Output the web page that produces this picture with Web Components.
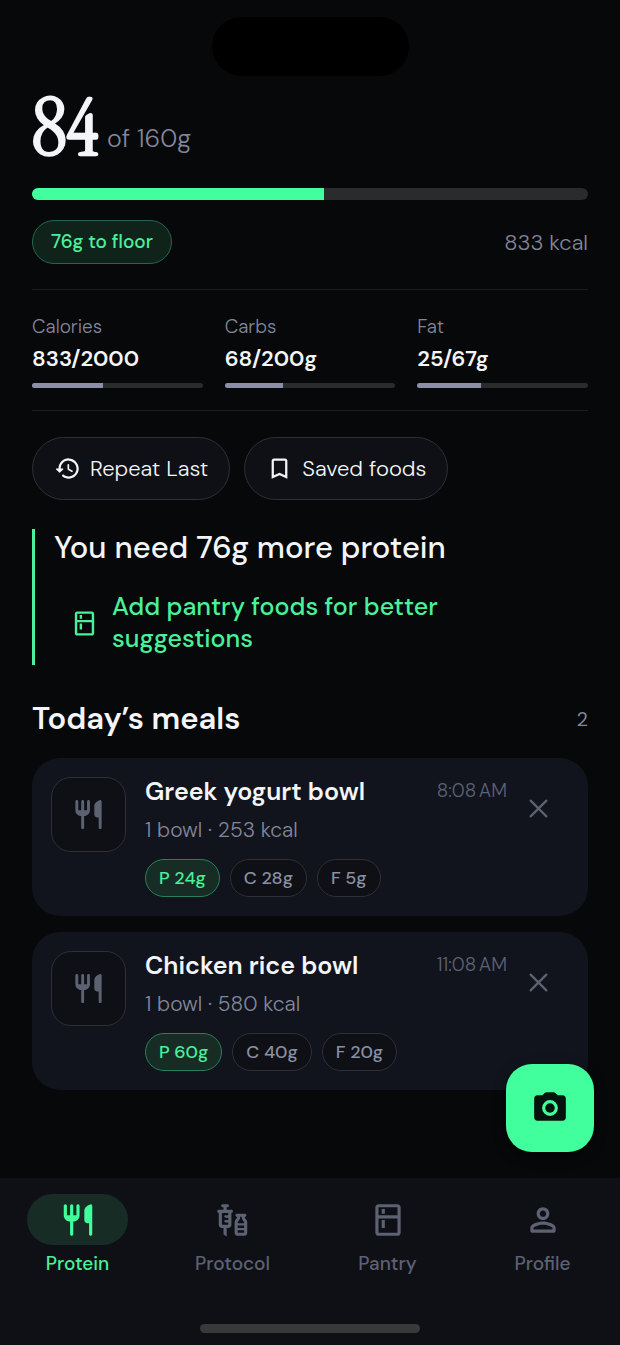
<!DOCTYPE html>
<html lang="en">
<head>
<meta charset="UTF-8">
<meta name="viewport" content="width=device-width, initial-scale=1">
<title>Protein</title>
<style>
  :root {
    --bg: #060809;
    --surface: #0e1015;
    --card: #11141c;
    --line: #1a1c1f;
    --outline: #2e3035;
    --track: #292b2d;
    --text: #f4f5f8;
    --muted: #83869b;
    --dim: #5d6273;
    --accent: #42ff9e;
    --accent-text: #4af09a;
    --accent-soft: #162c25;
    --accent-line: #23674a;
  }
  body {
    margin: 0;
    background: var(--bg);
    color: var(--text);
    font-family: "DM Sans", Inter, "Liberation Sans", sans-serif;
    font-optical-sizing: none;
  }
</style>
</head>
<body>
<protein-app></protein-app>

<script>
const ICONS = {
  restaurant: '<path d="M16 6v6c0 1.1.9 2 2 2h1v7c0 .55.45 1 1 1s1-.45 1-1V3.13c0-.65-.61-1.13-1.24-.98C17.6 2.68 16 4.51 16 6zm-5 3H9V3c0-.55-.45-1-1-1s-1 .45-1 1v6H5V3c0-.55-.45-1-1-1s-1 .45-1 1v6c0 2.21 1.79 4 4 4v8c0 .55.45 1 1 1s1-.45 1-1v-8c2.21 0 4-1.79 4-4V3c0-.55-.45-1-1-1s-1 .45-1 1v6z"/>',
  vaccines: '<path d="M11 5.5H8V4h.5c.55 0 1-.45 1-1s-.45-1-1-1h-3c-.55 0-1 .45-1 1s.45 1 1 1H6v1.5H3c-.55 0-1 .45-1 1s.45 1 1 1V15c0 1.1.9 2 2 2h1v4l2 1.5V17h1c1.1 0 2-.9 2-2V7.5c.55 0 1-.45 1-1s-.45-1-1-1zM9 9H7.25c-.41 0-.75.34-.75.75s.34.75.75.75H9V12H7.25c-.41 0-.75.34-.75.75s.34.75.75.75H9V15H5V7.5h4V9zm10.5 1.5V10c.55 0 1-.45 1-1s-.45-1-1-1h-5c-.55 0-1 .45-1 1s.45 1 1 1v.5c0 .5-1.5 1.16-1.5 3V20c0 1.1.9 2 2 2h4c1.1 0 2-.9 2-2v-6.5c0-1.84-1.5-2.5-1.5-3zm-3 0V10h1v.5c0 1.6 1.5 2 1.5 3v.5h-4v-.5c0-1 1.5-1.4 1.5-3zM19 15.5V17h-4v-1.5h4zM15 20v-1.5h4V20h-4z"/>',
  kitchen: '<path d="M18 2.01L6 2c-1.1 0-2 .89-2 2v16c0 1.1.9 2 2 2h12c1.1 0 2-.9 2-2V4c0-1.11-.9-1.99-2-1.99zM18 20H6v-9.02h12V20zm0-11H6V4h12v5zM8 5h2v3H8zm0 7h2v5H8z"/>',
  person: '<path d="M12 6c1.1 0 2 .9 2 2s-.9 2-2 2-2-.9-2-2 .9-2 2-2zm0 9c2.7 0 5.8 1.29 6 2v1H6v-.99c.2-.72 3.3-2.01 6-2.01zm0-11C9.79 4 8 5.79 8 8s1.79 4 4 4 4-1.79 4-4-1.79-4-4-4zm0 9c-2.67 0-8 1.34-8 4v2c0 .55.45 1 1 1h14c.55 0 1-.45 1-1v-2c0-2.66-5.33-4-8-4z"/>',
  history: '<path d="M13.26 3C8.17 2.86 4 6.95 4 12H2.21c-.45 0-.67.54-.35.85l2.79 2.8c.2.2.51.2.71 0l2.79-2.8c.31-.31.09-.85-.36-.85H6c0-3.9 3.18-7.05 7.1-7 3.72.05 6.85 3.18 6.9 6.9.05 3.91-3.1 7.1-7 7.1-1.61 0-3.1-.55-4.28-1.48-.4-.31-.96-.28-1.32.08-.42.42-.39 1.13.08 1.49C9 20.29 10.91 21 13 21c5.05 0 9.14-4.17 9-9.26-.13-4.69-4.05-8.61-8.74-8.74zm-.51 5c-.41 0-.75.35-.75.75v3.68c0 .35.19.68.49.86l3.12 1.85c.36.21.82.09 1.03-.26.21-.36.09-.82-.26-1.03l-2.88-1.71v-3.4c0-.4-.34-.74-.75-.74z"/>',
  bookmark: '<path d="M17 3H7c-1.1 0-1.99.9-1.99 2L5 21l7-3 7 3V5c0-1.1-.9-2-2-2zm0 15l-5-2.18L7 18V5h10v13z"/>',
  close: '<path d="M5 5l14 14M19 5L5 19" fill="none" stroke="currentColor" stroke-width="2" stroke-linecap="round"/>',
  camera: '<path fill-rule="evenodd" d="M20 4h-3.17l-1.24-1.35C15.22 2.24 14.68 2 14.12 2H9.88c-.56 0-1.1.24-1.48.65L7.17 4H4c-1.1 0-2 .9-2 2v12c0 1.1.9 2 2 2h16c1.1 0 2-.9 2-2V6c0-1.1-.9-2-2-2zM12 17a5 5 0 1 1 0-10 5 5 0 0 1 0 10z"/><circle cx="12" cy="12" r="3"/>'
};

class AppIcon extends HTMLElement {
  connectedCallback() {
    this.attachShadow({ mode: 'open' });
    this.shadowRoot.innerHTML = `
      <style>
        :host { display: block; flex: none; width: var(--icon-size, 24px); height: var(--icon-size, 24px); }
        svg { display: block; width: 100%; height: 100%; fill: currentColor; }
      </style>
      <svg viewBox="0 0 24 24" aria-hidden="true">${ICONS[this.getAttribute('name')]}</svg>
    `;
  }
}

class ProgressBar extends HTMLElement {
  connectedCallback() {
    this.attachShadow({ mode: 'open' });
    this.shadowRoot.innerHTML = `
      <style>
        :host {
          display: block;
          height: var(--bar-height, 5px);
          border-radius: 6px;
          background: var(--track);
          overflow: hidden;
        }
        div { height: 100%; width: ${this.getAttribute('value')}%; background: var(--bar-color, #8b90a8); }
      </style>
      <div></div>
    `;
  }
}

class MacroStat extends HTMLElement {
  connectedCallback() {
    this.attachShadow({ mode: 'open' });
    this.shadowRoot.innerHTML = `
      <style>
        :host { display: block; flex: 1; }
        .label { font-size: 19px; line-height: 24px; font-weight: 300; color: var(--muted); }
        .value { font-size: 22px; line-height: 30px; font-weight: 600; margin: 5px 0 9px; }
      </style>
      <div class="label">${this.getAttribute('label')}</div>
      <div class="value"><slot></slot></div>
      <progress-bar value="${this.getAttribute('value')}"></progress-bar>
    `;
  }
}

class ActionPill extends HTMLElement {
  connectedCallback() {
    this.attachShadow({ mode: 'open' });
    this.shadowRoot.innerHTML = `
      <style>
        :host { display: block; --icon-size: 27px; }
        button {
          display: flex;
          align-items: center;
          gap: 9px;
          height: 63px;
          padding: 0 21px;
          border: 1px solid var(--outline);
          border-radius: 32px;
          background: var(--surface);
          color: var(--text);
          font-family: inherit;
          font-size: 22px;
          font-weight: 300;
          white-space: nowrap;
          cursor: pointer;
        }
      </style>
      <button type="button"><app-icon name="${this.getAttribute('icon')}"></app-icon><slot></slot></button>
    `;
  }
}

class MacroChip extends HTMLElement {
  connectedCallback() {
    this.attachShadow({ mode: 'open' });
    this.shadowRoot.innerHTML = `
      <style>
        :host {
          display: block;
          box-sizing: border-box;
          height: 38px;
          padding: 0 13px;
          border: 1px solid var(--outline);
          border-radius: 19px;
          background: var(--surface);
          color: #8b8fa3;
          font-size: 18px;
          line-height: 36px;
          font-weight: 500;
          white-space: nowrap;
        }
        :host([accent]) {
          background: var(--accent-soft);
          border-color: #268256;
          color: var(--accent-text);
        }
      </style>
      <slot></slot>
    `;
  }
}

class MealCard extends HTMLElement {
  connectedCallback() {
    this.attachShadow({ mode: 'open' });
    this.shadowRoot.innerHTML = `
      <style>
        :host {
          display: flex;
          align-items: flex-start;
          padding: 19px;
          border-radius: 28px;
          background: var(--card);
        }
        .thumb {
          display: flex;
          align-items: center;
          justify-content: center;
          flex: none;
          box-sizing: border-box;
          width: 75px;
          height: 75px;
          border: 1px solid var(--outline);
          border-radius: 20px;
          background: var(--surface);
          color: var(--dim);
          --icon-size: 35px;
        }
        .body { flex: 1; min-width: 0; margin-left: 19px; }
        .head { display: flex; justify-content: space-between; align-items: flex-start; }
        h3 { margin: 0; font-size: 25px; line-height: 30px; font-weight: 600; }
        time { font-size: 19px; line-height: 28px; font-weight: 300; color: var(--dim); }
        p { margin: 9px 0 14px; font-size: 21px; line-height: 29px; font-weight: 300; color: var(--muted); }
        .chips { display: flex; gap: 10px; }
        button {
          display: flex;
          align-items: center;
          justify-content: center;
          flex: none;
          width: 62px;
          height: 62px;
          padding: 0;
          border: 0;
          background: none;
          color: var(--dim);
          cursor: pointer;
          --icon-size: 27px;
        }
      </style>
      <div class="thumb"><app-icon name="restaurant"></app-icon></div>
      <div class="body">
        <div class="head">
          <h3>${this.getAttribute('name')}</h3>
          <time>${this.getAttribute('time')}</time>
        </div>
        <p>${this.getAttribute('detail')}</p>
        <div class="chips"><slot></slot></div>
      </div>
      <button type="button" aria-label="Remove meal"><app-icon name="close"></app-icon></button>
    `;
  }
}

class NavItem extends HTMLElement {
  connectedCallback() {
    this.attachShadow({ mode: 'open' });
    this.shadowRoot.innerHTML = `
      <style>
        :host { display: block; flex: 1; color: var(--dim); --icon-size: 38px; }
        :host([active]) { color: var(--accent-text); }
        a {
          display: flex;
          flex-direction: column;
          align-items: center;
          gap: 6px;
          color: inherit;
          text-decoration: none;
          font-size: 19px;
          line-height: 26px;
          font-weight: 500;
        }
        .pill {
          display: flex;
          align-items: center;
          justify-content: center;
          width: 101px;
          height: 51px;
          border-radius: 26px;
        }
        :host([active]) .pill { background: var(--accent-soft); color: var(--accent); }
      </style>
      <a href="#${this.getAttribute('icon')}">
        <span class="pill"><app-icon name="${this.getAttribute('icon')}"></app-icon></span>
        <slot></slot>
      </a>
    `;
  }
}

class BottomNav extends HTMLElement {
  connectedCallback() {
    this.attachShadow({ mode: 'open' });
    this.shadowRoot.innerHTML = `
      <style>
        :host { display: block; padding: 16px 0 12px; background: var(--surface); }
        nav { display: flex; }
        .home { width: 220px; height: 9px; margin: 47px auto 0; border-radius: 5px; background: #39393a; }
      </style>
      <nav><slot></slot></nav>
      <div class="home"></div>
    `;
  }
}

class ProteinApp extends HTMLElement {
  connectedCallback() {
    this.attachShadow({ mode: 'open' });
    this.shadowRoot.innerHTML = `
      <style>
        :host { display: flex; flex-direction: column; min-height: 100vh; }
        .island { width: 197px; height: 59px; margin: 17px auto 0; border-radius: 30px; background: #000; }
        main { flex: 1; position: relative; padding: 0 32px 88px; }
        h2 { margin: 0; font-weight: 500; font-size: 31px; line-height: 38px; }

        .total { display: flex; align-items: flex-end; gap: 9px; height: 88px; margin-bottom: 24px; }
        .total strong { font: 700 80px/72px "Instrument Serif", "Liberation Serif", serif; }
        .total span { font-size: 25px; line-height: 32px; font-weight: 300; color: var(--muted); padding-bottom: 9px; }
        .goal { --bar-height: 12px; --bar-color: var(--accent); }
        .status { display: flex; justify-content: space-between; align-items: center; margin: 20px 0 25px; }
        .badge {
          padding: 0 18px;
          border: 1px solid var(--accent-line);
          border-radius: 22px;
          background: #0f231b;
          color: var(--accent-text);
          font-size: 19px;
          line-height: 42px;
          font-weight: 500;
        }
        .kcal { font-size: 22px; font-weight: 300; color: var(--muted); }

        .macros {
          display: flex;
          gap: 22px;
          padding: 25px 0 22px;
          border-top: 1px solid var(--line);
          border-bottom: 1px solid var(--line);
        }
        .actions { display: flex; gap: 14px; margin: 26px 0 29px; }

        .need { padding-left: 19px; border-left: 3px solid var(--accent-text); }
        .need button {
          display: flex;
          align-items: center;
          gap: 13px;
          margin-top: 15px;
          padding: 9px 100px 10px 16px;
          border: 0;
          background: none;
          color: var(--accent-text);
          font-family: inherit;
          font-size: 25px;
          line-height: 32px;
          font-weight: 500;
          text-align: left;
          cursor: pointer;
          --icon-size: 29px;
        }

        .meals-head { display: flex; justify-content: space-between; align-items: center; margin: 35px 0 20px; }
        .meals-head h2 { font-weight: 600; }
        .meals-head span { font-size: 20px; color: var(--muted); }
        .meals { display: flex; flex-direction: column; gap: 16px; }

        .fab {
          position: absolute;
          right: 26px;
          bottom: 26px;
          display: flex;
          align-items: center;
          justify-content: center;
          width: 88px;
          height: 88px;
          padding: 0;
          border: 0;
          border-radius: 26px;
          background: var(--accent);
          color: #04140c;
          box-shadow: 0 4px 12px rgba(0, 0, 0, 0.5);
          cursor: pointer;
          --icon-size: 38px;
        }
      </style>
      <div class="island"></div>
      <main>
        <div class="total"><strong>84</strong><span>of 160g</span></div>
        <progress-bar class="goal" value="52.5"></progress-bar>
        <div class="status">
          <span class="badge">76g to floor</span>
          <span class="kcal">833 kcal</span>
        </div>
        <section class="macros">
          <macro-stat label="Calories" value="41.7">833/2000</macro-stat>
          <macro-stat label="Carbs" value="34">68/200g</macro-stat>
          <macro-stat label="Fat" value="37.4">25/67g</macro-stat>
        </section>
        <div class="actions">
          <action-pill icon="history">Repeat Last</action-pill>
          <action-pill icon="bookmark">Saved foods</action-pill>
        </div>
        <section class="need">
          <h2>You need 76g more protein</h2>
          <button type="button"><app-icon name="kitchen"></app-icon><span>Add pantry foods for better suggestions</span></button>
        </section>
        <div class="meals-head"><h2>Today’s meals</h2><span>2</span></div>
        <section class="meals">
          <meal-card name="Greek yogurt bowl" time="8:08&#8239;AM" detail="1 bowl · 253 kcal">
            <macro-chip accent>P 24g</macro-chip>
            <macro-chip>C 28g</macro-chip>
            <macro-chip>F 5g</macro-chip>
          </meal-card>
          <meal-card name="Chicken rice bowl" time="11:08&#8239;AM" detail="1 bowl · 580 kcal">
            <macro-chip accent>P 60g</macro-chip>
            <macro-chip>C 40g</macro-chip>
            <macro-chip>F 20g</macro-chip>
          </meal-card>
        </section>
        <button class="fab" type="button" aria-label="Scan a meal"><app-icon name="camera"></app-icon></button>
      </main>
      <bottom-nav>
        <nav-item icon="restaurant" active>Protein</nav-item>
        <nav-item icon="vaccines">Protocol</nav-item>
        <nav-item icon="kitchen">Pantry</nav-item>
        <nav-item icon="person">Profile</nav-item>
      </bottom-nav>
    `;
  }
}

customElements.define('app-icon', AppIcon);
customElements.define('progress-bar', ProgressBar);
customElements.define('macro-stat', MacroStat);
customElements.define('action-pill', ActionPill);
customElements.define('macro-chip', MacroChip);
customElements.define('meal-card', MealCard);
customElements.define('nav-item', NavItem);
customElements.define('bottom-nav', BottomNav);
customElements.define('protein-app', ProteinApp);
</script>
</body>
</html>
